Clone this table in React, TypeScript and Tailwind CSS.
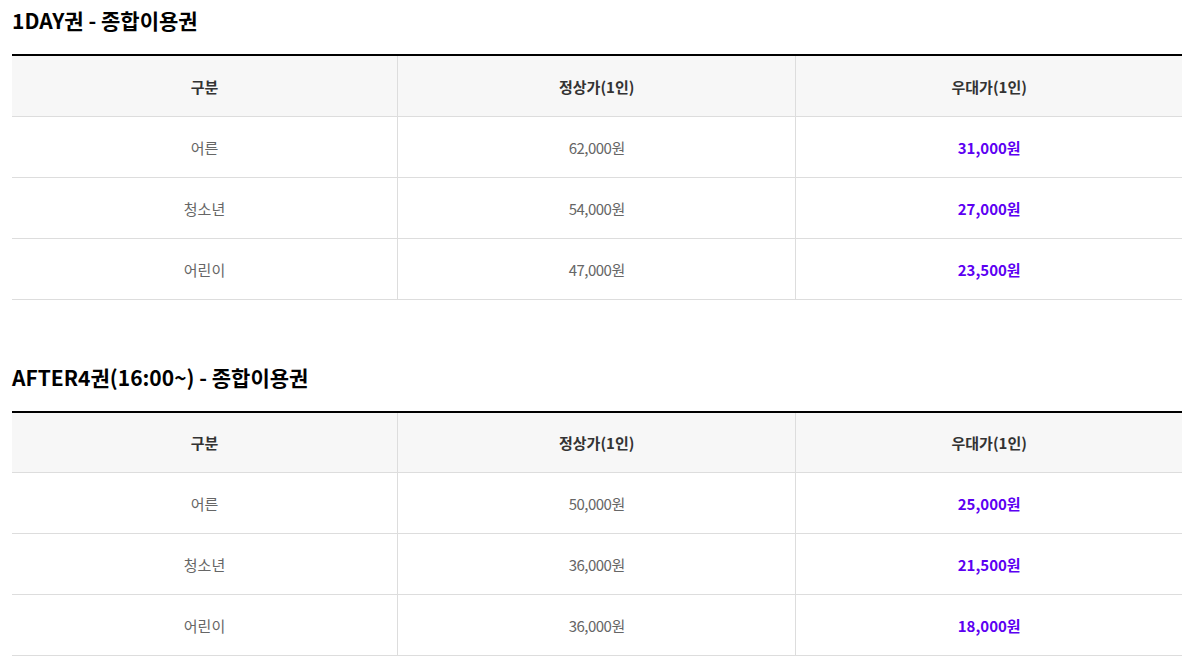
import React from "react";

type Row = { label: string; normal: string; sale: string };

const sections: { title: string; rows: Row[] }[] = [
  {
    title: "1DAY권 - 종합이용권",
    rows: [
      { label: "어른", normal: "62,000원", sale: "31,000원" },
      { label: "청소년", normal: "54,000원", sale: "27,000원" },
      { label: "어린이", normal: "47,000원", sale: "23,500원" },
    ],
  },
  {
    title: "AFTER4권(16:00~) - 종합이용권",
    rows: [
      { label: "어른", normal: "50,000원", sale: "25,000원" },
      { label: "청소년", normal: "36,000원", sale: "21,500원" },
      { label: "어린이", normal: "36,000원", sale: "18,000원" },
    ],
  },
];

function PriceTable({ rows }: { rows: Row[] }) {
  return (
    <table className="w-full table-fixed border-collapse border-t-2 border-black text-[15px]">
      <colgroup>
        <col className="w-[32.95%]" />
        <col className="w-[34.05%]" />
        <col />
      </colgroup>
      <thead>
        <tr className="h-[61px] bg-[#f7f7f7] text-[#333]">
          <th className="border-b border-r border-[#ddd] pt-[2px] font-bold">구분</th>
          <th className="border-b border-r border-[#ddd] pt-[2px] font-bold">정상가(1인)</th>
          <th className="border-b border-[#ddd] pt-[2px] font-bold">우대가(1인)</th>
        </tr>
      </thead>
      <tbody>
        {rows.map((r) => (
          <tr key={r.label} className="h-[61px] text-center">
            <td className="border-b border-r border-[#ddd] pt-[3px] text-[#666]">{r.label}</td>
            <td className="border-b border-r border-[#ddd] pt-[3px] tracking-[-0.5px] text-[#666]">{r.normal}</td>
            <td className="border-b border-[#ddd] pt-[3px] font-bold text-[#5c00f2]">{r.sale}</td>
          </tr>
        ))}
      </tbody>
    </table>
  );
}

export default function App() {
  return (
    <div
      className="min-h-screen bg-white pl-[12px] pr-[17px] pt-[5px]"
      style={{ fontFamily: '"Noto Sans CJK KR", "Noto Sans", sans-serif' }}
    >
      {sections.map((s, i) => (
        <section key={s.title} className={i > 0 ? "mt-[62px]" : ""}>
          <h3 className="mb-[19px] text-[21px] font-bold leading-[30px] text-black">
            {s.title}
          </h3>
          <PriceTable rows={s.rows} />
        </section>
      ))}
    </div>
  );
}
